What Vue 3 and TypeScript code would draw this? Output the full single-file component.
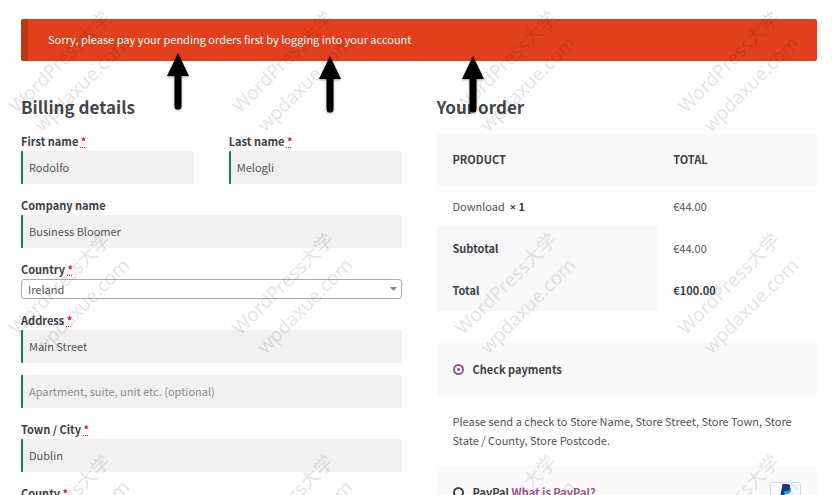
<script setup lang="ts">
import { ref } from 'vue'

interface Arrow {
  x: number
  y: number
}

const firstName = ref('Rodolfo')
const lastName = ref('Melogli')
const company = ref('Business Bloomer')
const country = ref('Ireland')
const address1 = ref('Main Street')
const address2 = ref('')
const city = ref('Dublin')
const county = ref('')
const payment = ref('cheque')

const arrows: Arrow[] = [
  { x: 178, y: 53 },
  { x: 330, y: 56 },
  { x: 473, y: 56 },
]
</script>

<template>
  <div class="page">
    <div class="notice" role="alert">Sorry, please pay your pending orders first by logging into your account</div>

    <form class="checkout" @submit.prevent>
      <section class="column">
        <h2>Billing details</h2>
        <div class="pair">
          <div class="field">
            <label for="first-name">First name <abbr title="required">*</abbr></label>
            <input id="first-name" v-model="firstName" type="text" />
          </div>
          <div class="field">
            <label for="last-name">Last name <abbr title="required">*</abbr></label>
            <input id="last-name" v-model="lastName" type="text" />
          </div>
        </div>
        <div class="field">
          <label for="company">Company name</label>
          <input id="company" v-model="company" type="text" />
        </div>
        <div class="field">
          <label for="country">Country <abbr title="required">*</abbr></label>
          <div class="select">
            <select id="country" v-model="country">
              <option>Ireland</option>
            </select>
            <svg class="caret" viewBox="0 0 7 4" aria-hidden="true"><path d="M0 0h7L3.5 4z" /></svg>
          </div>
        </div>
        <div class="field">
          <label for="address-1">Address <abbr title="required">*</abbr></label>
          <input id="address-1" v-model="address1" type="text" />
        </div>
        <div class="field">
          <input v-model="address2" type="text" aria-label="Address line 2" placeholder="Apartment, suite, unit etc. (optional)" />
        </div>
        <div class="field">
          <label for="city">Town / City <abbr title="required">*</abbr></label>
          <input id="city" v-model="city" type="text" />
        </div>
        <div class="field">
          <label for="county">County <abbr title="required">*</abbr></label>
          <input id="county" v-model="county" type="text" />
        </div>
      </section>

      <section class="column">
        <h2>Your order</h2>
        <table>
          <thead>
            <tr><th scope="col">PRODUCT</th><th scope="col">TOTAL</th></tr>
          </thead>
          <tbody>
            <tr><td>Download&nbsp; <strong><span class="times">×</span> 1</strong></td><td>€44.00</td></tr>
          </tbody>
          <tfoot>
            <tr><th scope="row">Subtotal</th><td>€44.00</td></tr>
            <tr><th scope="row">Total</th><td><strong>€100.00</strong></td></tr>
          </tfoot>
        </table>

        <div class="method">
          <input id="pay-cheque" v-model="payment" type="radio" name="payment" value="cheque" />
          <label for="pay-cheque">Check payments</label>
        </div>
        <p class="description">Please send a check to Store Name, Store Street, Store Town, Store State / County, Store Postcode.</p>
        <div class="method">
          <input id="pay-paypal" v-model="payment" type="radio" name="payment" value="paypal" />
          <span class="name"><label for="pay-paypal">PayPal</label> <a href="#paypal">What is PayPal?</a></span>
          <svg class="paypal" viewBox="0 0 31 20" role="img" aria-label="PayPal">
            <rect x=".5" y=".5" width="30" height="19" rx="2" fill="#fdfdfd" stroke="#d5d8dc" />
            <path d="M13.500 5h5c2 0 3 1.500 2.500 3.500-.6 2.700-2.300 3.700-4.500 3.700h-1.400l-.8 4.800h-3z" fill="#1f9ad7" />
            <path d="M12.500 2h5c2.200 0 3 1.500 2.500 3.500-.6 2.700-2.300 3.600-4.500 3.600h-1.400l-.8 5.500h-3z" fill="#143a80" />
          </svg>
        </div>
      </section>
    </form>

    <svg class="overlay" aria-hidden="true">
      <defs>
        <pattern id="watermark" width="223" height="222" patternUnits="userSpaceOnUse">
          <g class="mark" transform="translate(71 73) rotate(-45)">
            <text y="-9">WordPress大学</text>
            <text y="22">wpdaxue.com</text>
          </g>
        </pattern>
      </defs>
      <rect width="100%" height="100%" fill="url(#watermark)" />
      <g v-for="arrow in arrows" :key="arrow.x" class="arrow" :transform="`translate(${arrow.x} ${arrow.y})`">
        <path d="M0 0L11 23H3.500V53a3.500 3.500 0 0 1-7 0V23H-11z" />
      </g>
    </svg>
  </div>
</template>

<style>
body {
  margin: 0;
  background: #fff;
}
</style>

<style scoped>
* {
  box-sizing: border-box;
}

.page {
  position: relative;
  overflow: hidden;
  padding: 19px 23px 16px 21px;
  background: #fefefe;
  color: #505458;
  font: 11px/19px "Noto Sans CJK SC", "Open Sans", sans-serif;
}

.notice {
  padding: 11px 20px 12px;
  border-left: 7px solid #c23616;
  border-radius: 2px;
  background: #e2401c;
  color: #fff;
}

.checkout {
  display: grid;
  grid-template-columns: 1fr 1fr;
  gap: 35px;
}

.column {
  min-width: 0;
}

h2 {
  margin: 32px 0 11px;
  color: #43474b;
  font-size: 17px;
  line-height: 28px;
  font-weight: 700;
}

.pair {
  display: grid;
  grid-template-columns: 1fr 1fr;
  gap: 35px;
}

.field {
  margin-bottom: 12px;
}

.field label {
  display: block;
  color: #3c4045;
  font-weight: 700;
}

abbr {
  color: #d8232a;
  text-decoration: underline dotted;
}

.field input {
  display: block;
  width: 100%;
  height: 33px;
  padding: 0 6px 2px;
  border: 0;
  border-left: 2px solid #0f834d;
  border-radius: 1px;
  background: #f1f1f1;
  color: #505458;
  font: inherit;
}

.field input::placeholder {
  color: #898c8f;
  opacity: 1;
}

.select {
  position: relative;
}

select {
  display: block;
  width: 100%;
  height: 20px;
  padding: 0 6px;
  border: 1px solid #aaa;
  border-radius: 3px;
  background: #fff;
  color: #505458;
  font: inherit;
  appearance: none;
}

.caret {
  position: absolute;
  top: 8px;
  right: 5px;
  width: 7px;
  height: 4px;
  fill: #888;
}

table {
  width: 100%;
  margin: 13px 0 32px;
  border-collapse: collapse;
  table-layout: fixed;
}

th,
td {
  height: 42px;
  padding: 0 16px;
  text-align: left;
}

th:first-child {
  width: 58%;
}

th,
td strong {
  color: #3c4045;
  font-weight: 700;
}

.times {
  font-family: "Open Sans", sans-serif;
}

thead th {
  height: 51px;
  background: #f8f8f8;
}

tbody td {
  background: #fdfdfd;
}

tfoot th {
  background: #f8f8f8;
}

.method {
  display: flex;
  align-items: center;
  height: 52px;
  padding: 0 16px;
  background: #fafafa;
  color: #3c4045;
  font-weight: 700;
}

.method input {
  width: 11px;
  height: 11px;
  margin: 0 9px 0 0;
  border: 2px solid #3c4045;
  border-radius: 50%;
  background: transparent;
  appearance: none;
}

.method input:checked {
  border-color: #96588a;
  background: radial-gradient(circle, #96588a 0 1px, transparent 2px);
}

.method a {
  color: #96588a;
  text-decoration: none;
}

.paypal {
  width: 31px;
  height: 20px;
  margin-left: auto;
}

.description {
  margin: 0;
  padding: 17px 16px 16px;
}

.overlay {
  position: absolute;
  inset: 0;
  width: 100%;
  height: 100%;
  pointer-events: none;
}

.mark {
  fill: #000;
  fill-opacity: 0.1;
  font-family: "Noto Sans", "Noto Sans CJK SC", sans-serif;
  font-size: 19px;
  text-anchor: middle;
}

.arrow {
  fill: #000;
  filter: drop-shadow(0 1px 1px rgb(0 0 0 / 40%));
}
</style>
